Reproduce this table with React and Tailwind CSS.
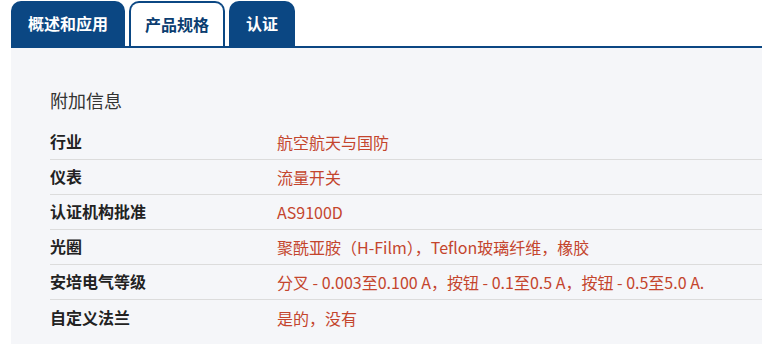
const tabs = [
  { label: '概述和应用', active: false },
  { label: '产品规格', active: true },
  { label: '认证', active: false },
];

const specs = [
  { name: '行业', value: '航空航天与国防' },
  { name: '仪表', value: '流量开关' },
  { name: '认证机构批准', value: 'AS9100D' },
  { name: '光圈', value: '聚酰亚胺（H-Film），Teflon玻璃纤维，橡胶' },
  { name: '安培电气等级', value: '分叉 - 0.003至0.100 A，按钮 - 0.1至0.5 A，按钮 - 0.5至5.0 A.' },
  { name: '自定义法兰', value: '是的，没有' },
];

export default function App() {
  return (
    <div
      className="w-[762px] h-[344px] bg-white overflow-hidden pl-[11px]"
      style={{ fontFamily: '"Noto Sans", "Noto Sans CJK SC", sans-serif' }}
    >
      <div className="flex items-end gap-[4px] pt-[1px] h-[46px]">
        {tabs.map((tab) =>
          tab.active ? (
            <div
              key={tab.label}
              className="h-[45px] flex items-center px-[14px] bg-white border-2 border-b-0 border-[#0b4783] rounded-t-[10px] text-[#0b3d70] font-bold text-[16px]"
            >
              {tab.label}
            </div>
          ) : (
            <div
              key={tab.label}
              className="h-[45px] flex items-center px-[17px] bg-[#0b4783] rounded-t-[10px] text-white font-bold text-[16px]"
            >
              {tab.label}
            </div>
          )
        )}
      </div>
      <div className="h-[2px] bg-[#0b4783]" />
      <div className="bg-[#f5f6f9] h-[300px] pl-[39px] pt-[41px]">
        <div className="text-[18px] text-[#333] leading-[24px] mb-[12px]">附加信息</div>
        <div className="flex flex-col">
          {specs.map((row, i) => (
            <div
              key={row.name}
              className={`flex items-center h-[35px] ${i < specs.length - 1 ? 'border-b border-[#dcdcdc]' : ''}`}
            >
              <div className="w-[227px] font-bold text-[16px] text-[#222]">{row.name}</div>
              <div
                className="text-[16px] text-[#c4452d]"
                style={{ fontFamily: '"Noto Sans CJK SC", sans-serif' }}
              >
                {row.value}
              </div>
            </div>
          ))}
        </div>
      </div>
    </div>
  );
}
